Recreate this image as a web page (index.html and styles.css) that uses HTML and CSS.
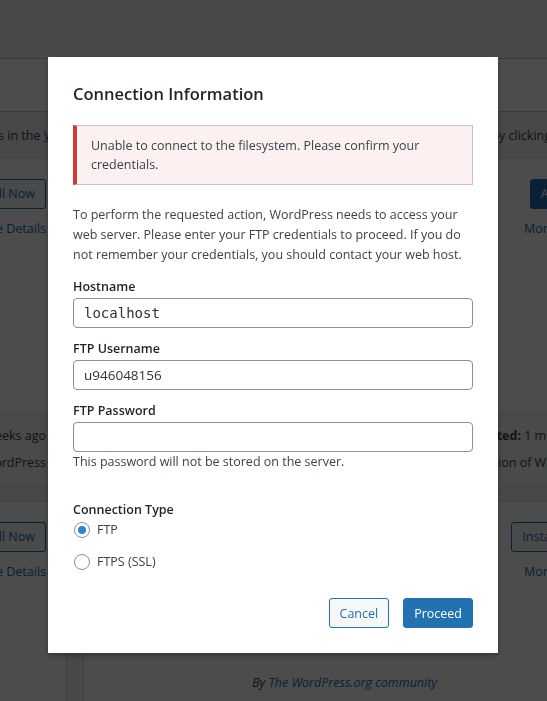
FILE: index.html
```html
<!DOCTYPE html>
<html lang="en">
<head>
<meta charset="utf-8">
<title>Add Plugins</title>
<link rel="stylesheet" href="styles.css">
</head>
<body>
<div class="page">
  <div class="topbar"></div>
  <div class="filterbar"></div>
  <p class="intro">Plugins extend and expand the functionality of WordPress. You may install plugins in the <a href="#">WordPress Plugin Directory</a> right from here, or upload a plugin in .zip format by clicking the button at the top of this page.</p>
  <div class="cards">
    <div class="card">
      <div class="card-top">
        <div class="icon"></div>
        <div class="col-name">
          <h3>Classic Editor</h3>
          <p class="desc">Enables the previous "classic" editor and the old-style Edit Post screen with TinyMCE, Meta Boxes, etc.</p>
          <p class="author"><i>By <a href="#">WordPress Contributors</a></i></p>
        </div>
        <ul class="actions">
          <li><a class="btn" href="#">Install Now</a></li>
          <li><a class="link" href="#">More Details</a></li>
        </ul>
      </div>
      <div class="card-bottom">
        <div class="col-left"><div>★★★★★ (1,154)</div><div>5+ Million Active Installations</div></div>
        <div class="col-right"><div><strong>Last Updated:</strong> 3 weeks ago</div><div><strong>Compatible</strong> with your version of WordPress</div></div>
      </div>
    </div>
    <div class="card">
      <div class="card-top">
        <div class="icon"></div>
        <div class="col-name">
          <h3>Akismet Anti-Spam</h3>
          <p class="desc">The best anti-spam protection to block spam comments and spam in a contact form.</p>
          <p class="author"><i>By <a href="#">Automattic</a></i></p>
        </div>
        <ul class="actions">
          <li><a class="btn btn-fill" href="#">Activate</a></li>
          <li><a class="link" href="#">More Details</a></li>
        </ul>
      </div>
      <div class="card-bottom">
        <div class="col-left"><div>★★★★½ (967)</div><div>5+ Million Active Installations</div></div>
        <div class="col-right"><div><strong>Last Updated:</strong> 1 month ago</div><div><strong>Compatible</strong> with your version of WordPress</div></div>
      </div>
    </div>
    <div class="card">
      <div class="card-top">
        <div class="icon"></div>
        <div class="col-name">
          <h3>Jetpack</h3>
          <p class="desc">Security, performance, and marketing tools made by WordPress experts.</p>
          <p class="author"><i>By <a href="#">Automattic</a></i></p>
        </div>
        <ul class="actions">
          <li><a class="btn" href="#">Install Now</a></li>
          <li><a class="link" href="#">More Details</a></li>
        </ul>
      </div>
    </div>
    <div class="card">
      <div class="card-top">
        <div class="icon"></div>
        <div class="col-name">
          <h3>Gutenberg</h3>
          <p class="desc desc-end"><span>The Gutenberg plugin provides editing, customization, and site building features to WordPress. This beta plugin allows you to test bleeding-edge features before they land in future releases.</span><span>Become a contributor.</span></p>
          <p class="author"><i>By <a href="#">The WordPress.org community</a></i></p>
        </div>
        <ul class="actions">
          <li><a class="btn" href="#">Install Now</a></li>
          <li><a class="link" href="#">More Details</a></li>
        </ul>
      </div>
    </div>
  </div>
</div>

<div class="backdrop"></div>

<div class="modal" role="dialog" aria-labelledby="conn-title">
  <h2 class="modal-title" id="conn-title">Connection Information</h2>
  <div class="notice"><p>Unable to connect to the filesystem. Please confirm your credentials.</p></div>
  <p class="lead">To perform the requested action, WordPress needs to access your web server. Please enter your FTP credentials to proceed. If you do not remember your credentials, you should contact your web host.</p>
  <div class="field">
    <label for="hostname">Hostname</label>
    <input id="hostname" class="text code" type="text" value="localhost">
  </div>
  <div class="field">
    <label for="username">FTP Username</label>
    <input id="username" class="text" type="text" value="u946048156">
  </div>
  <div class="field">
    <label for="password">FTP Password</label>
    <input id="password" class="text" type="password" value="">
    <p class="help">This password will not be stored on the server.</p>
  </div>
  <fieldset class="conn-type">
    <legend>Connection Type</legend>
    <label class="radio"><input type="radio" name="connection_type" value="ftp" checked><span>FTP</span></label>
    <label class="radio"><input type="radio" name="connection_type" value="ftps"><span>FTPS (SSL)</span></label>
  </fieldset>
  <div class="buttons">
    <button class="button button-cancel" type="button">Cancel</button>
    <button class="button button-primary" type="button">Proceed</button>
  </div>
</div>
</body>
</html>
```

FILE: styles.css
```css
html, body {
  margin: 0;
  padding: 0;
  overflow: hidden;
  height: 100%;
}

body {
  background: #f0f0f1;
  color: #3c434a;
  font-family: "Open Sans", "Noto Sans", sans-serif;
  font-size: 12.5px;
  line-height: 1.5;
}

a { color: #2271b1; }

/* ---------- background page ---------- */
.page {
  width: 547px;
}

.topbar {
  height: 58px;
}

.filterbar {
  height: 52px;
  background: #fff;
  border-top: 1px solid #c3c4c7;
  border-bottom: 1px solid #c3c4c7;
}

.intro {
  margin: 0 0 0 -473px;
  padding: 14px 0 12px;
  line-height: 20px;
  white-space: nowrap;
}

.cards {
  display: grid;
  grid-template-columns: 536px 536px;
  column-gap: 16px;
  row-gap: 16px;
  margin-left: -469px;
}

.card {
  background: #fff;
  border: 1px solid #dcdcde;
}

.card-top {
  height: 255px;
  box-sizing: border-box;
  padding: 20px;
  display: flex;
  overflow: hidden;
}

.icon {
  width: 128px;
  height: 128px;
  flex: none;
  margin-right: 20px;
  background: #c5d9ed;
}

.col-name {
  flex: 1;
  min-width: 0;
}

.col-name h3 {
  margin: 0 0 12px;
  font-size: 18px;
  line-height: 23px;
  color: #2271b1;
}

.desc {
  margin: 0;
  line-height: 20px;
  height: 100px;
  overflow: hidden;
}

.desc-end {
  display: flex;
  flex-direction: column;
  justify-content: flex-end;
}

.author {
  margin: 16px 0 0;
  line-height: 20px;
}

.author a { text-decoration: none; }

.actions {
  list-style: none;
  margin: 0 0 0 20px;
  padding: 0;
  display: flex;
  flex-direction: column;
  align-items: flex-end;
  flex: none;
}

.actions li {
  margin-bottom: 10px;
  line-height: 19px;
}

.btn {
  display: inline-block;
  border: 1px solid #2271b1;
  border-radius: 3px;
  background: #f6f7f7;
  color: #2271b1;
  padding: 0 10px;
  line-height: 28px;
  text-decoration: none;
}

.btn-fill {
  background: #2271b1;
  color: #fff;
}

.link { text-decoration: none; }

.card-bottom {
  border-top: 1px solid #dcdcde;
  background: #f6f7f7;
  padding: 11px 20px;
  display: flex;
  justify-content: space-between;
}

.card-bottom div div {
  line-height: 20px;
}

.card-bottom div div + div {
  margin-top: 7px;
}

.col-right { text-align: right; }

/* ---------- overlay & dialog ---------- */
.backdrop {
  position: fixed;
  inset: 0;
  background: rgba(0, 0, 0, 0.7);
}

.modal {
  position: fixed;
  left: 48px;
  top: 57px;
  width: 450px;
  box-sizing: border-box;
  padding: 25px;
  background: #fff;
  box-shadow: 0 3px 6px rgba(0, 0, 0, 0.3);
}

.modal-title {
  margin: 0 0 19px;
  font-size: 16.5px;
  line-height: 24px;
  font-weight: 600;
  color: #1d2327;
}

.notice {
  background: #fcf0f1;
  border: 1px solid #c3c4c7;
  border-left: 4px solid #d63638;
  padding: 1px 12px;
}

.notice p {
  margin: 6.5px 0;
  padding: 2px;
  line-height: 19.5px;
}

.lead {
  margin: 20px 0 12px;
  line-height: 20px;
}

.field label {
  display: block;
  font-weight: 600;
  color: #1d2327;
  line-height: 20px;
  margin-bottom: 1px;
}

.field + .field { margin-top: 11px; }

input.text {
  display: block;
  width: 100%;
  box-sizing: border-box;
  height: 30px;
  margin: 0;
  padding: 0 10px;
  border: 1px solid #8c8f94;
  border-radius: 4px;
  background: #fff;
  color: #2c3338;
  font-family: "Open Sans", "Noto Sans", sans-serif;
  font-size: 13.5px;
}

input.code {
  font-family: "DejaVu Sans Mono", monospace;
  font-size: 14px;
}

.help {
  margin: 0;
  line-height: 20px;
}

.conn-type {
  border: 0;
  margin: 28px 0 0;
  padding: 0;
}

.conn-type legend {
  padding: 0;
  font-weight: 600;
  color: #1d2327;
  line-height: 20px;
}

.radio {
  display: flex;
  align-items: center;
  line-height: 20px;
}

.radio + .radio { margin-top: 12px; }

.radio input {
  appearance: none;
  -webkit-appearance: none;
  width: 16px;
  height: 16px;
  margin: 0 7px 0 1px;
  border: 1px solid #8c8f94;
  border-radius: 50%;
  background: #fff;
  display: grid;
  place-content: center;
  box-sizing: border-box;
}

.radio input:checked::before {
  content: "";
  width: 8px;
  height: 8px;
  border-radius: 50%;
  background: #3582c4;
}

.buttons {
  display: flex;
  justify-content: flex-end;
  gap: 14px;
  margin-top: 26px;
}

.button {
  font-family: inherit;
  font-size: 12.5px;
  height: 30px;
  padding: 0 10px;
  border-radius: 3px;
  border: 1px solid #2271b1;
  cursor: pointer;
}

.button-cancel {
  background: #f6f7f7;
  color: #2271b1;
}

.button-primary {
  background: #2271b1;
  color: #fff;
}
```
